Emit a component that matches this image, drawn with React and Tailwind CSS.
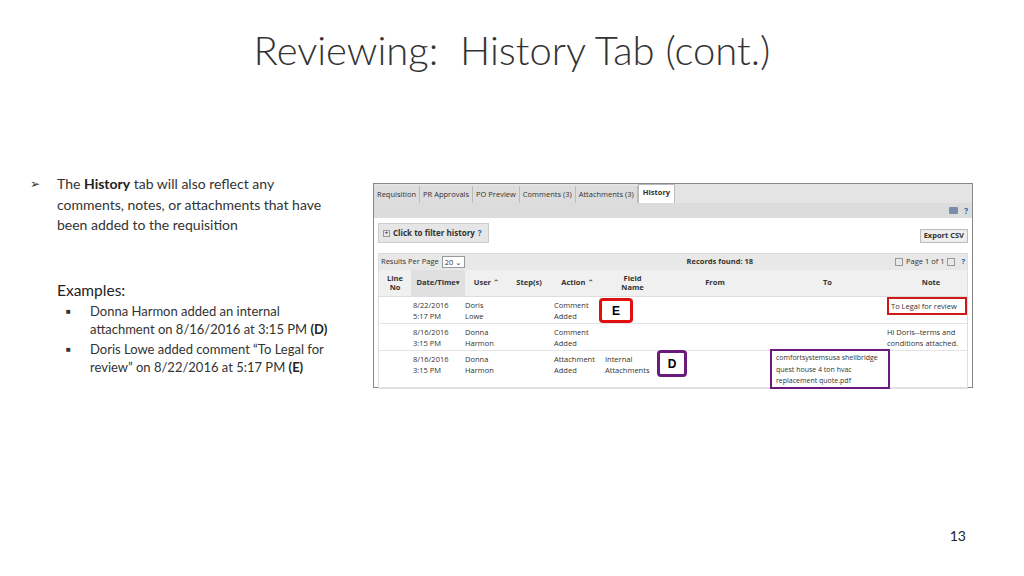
export default function App() {
  const f = { fontFamily: "Lato, 'Open Sans', sans-serif" };
  const s = { fontFamily: "'Open Sans', 'DejaVu Sans', sans-serif" };
  const cols = "grid grid-cols-[32px_54px_43px_42px_55px_55px_110px_115px_92px]";
  return (
    <div className="w-[1024px] h-[576px] bg-white relative overflow-hidden" style={f}>
      <div className="pt-[26px] text-center text-[40px] font-light text-[#333] leading-[48px]">Reviewing:&nbsp; History Tab (cont.)</div>
      <div className="flex mt-[100px]">
        <div className="w-[373px] flex-none pl-[30px] text-[14px] text-[#333] leading-[20.5px]">
          <div className="flex">
            <span className="w-[27px] flex-none text-[12px]">➢</span>
            <div className="w-[268px]">The <span className="font-bold text-[#222]">History</span> tab will also reflect any comments, notes, or attachments that have been added to the requisition</div>
          </div>
          <div className="ml-[27px] mt-[44px] text-[15.5px] text-[#222]">Examples:</div>
          <div className="ml-[36px] mt-[2px] text-[13px] leading-[18px]">
            {[["Donna Harmon added an internal attachment on 8/16/2016 at 3:15 PM ", "(D)"], ["Doris Lowe added comment “To Legal for review” on 8/22/2016 at 5:17 PM ", "(E)"]].map(([t, b], i) => (
              <div key={i} className="flex mb-[2px]">
                <span className="w-[24px] flex-none text-[8px] leading-[18px]">■</span>
                <div className="w-[250px]">{t}<span className="font-bold text-[#222] whitespace-nowrap">{b}</span></div>
              </div>
            ))}
          </div>
        </div>
        <div className="mt-[9px] w-[600px] h-[205px] flex-none border border-[#888] text-[8px] text-[#333] relative" style={s}>
          <div className="flex bg-[#e4e4e4] h-[19px] items-end text-[7.5px]">
            {["Requisition", "PR Approvals", "PO Preview", "Comments (3)", "Attachments (3)"].map((t) => (
              <div key={t} className="px-[3px] h-[17px] border-r border-[#bbb] flex items-center bg-[#ddd]">{t}</div>
            ))}
            <div className="px-[4px] h-[19px] font-bold bg-white border-x border-t border-[#bbb] flex items-start pt-[2px]">History</div>
          </div>
          <div className="h-[15px] bg-[#dcdcdc] flex items-center justify-end pr-[4px] gap-[6px]">
            <span className="w-[9px] h-[7px] bg-[#7a8ea8] rounded-[1px]" />
            <span className="text-[#1b5fb0] font-bold">?</span>
          </div>
          <div className="flex justify-between items-start px-[4px] pt-[5px]">
            <div className="h-[20px] w-[111px] bg-[#e6e6e6] border border-[#ccc] flex items-center gap-[3px] pl-[4px] font-bold">
              <span className="w-[7px] h-[7px] border border-[#999] text-[6px] leading-[5px] text-center">+</span>Click to filter history <span className="text-[#1b5fb0]">?</span>
            </div>
            <div className="mt-[6px] h-[14px] px-[3px] border border-[#bbb] bg-[#eee] font-bold text-[7.5px] flex items-center">Export CSV</div>
          </div>
          <div className="mx-[4px] mt-[10px] border border-[#ddd]">
            <div className="h-[16px] bg-[#e8e8e8] flex items-center justify-between px-[2px] text-[7.5px]">
              <div className="flex items-center gap-[3px]">Results Per Page <span className="border border-[#999] bg-white px-[2px] h-[12px] leading-[10px]">20 ⌄</span></div>
              <div className="font-bold ml-[80px]">Records found: 18</div>
              <div className="flex items-center gap-[3px]"><span className="w-[8px] h-[8px] border border-[#999]" />Page 1 of 1<span className="w-[8px] h-[8px] border border-[#999]" /><span className="text-[#1b5fb0] font-bold ml-[3px]">?</span></div>
            </div>
            <div className={`${cols} h-[27px] bg-[#f0f0f0] font-bold text-[7.5px] items-center text-center border-b border-[#ddd]`}>
              <div className="leading-[9px]">Line<br />No</div><div className="bg-[#e0e0e0] h-full flex items-center justify-center">Date/Time▾</div><div>User ⌃</div><div>Step(s)</div><div>Action ⌃</div><div className="leading-[9px]">Field<br />Name</div><div>From</div><div>To</div><div>Note</div>
            </div>
            {[
              ["8/22/2016", "5:17 PM", "Doris", "Lowe", "Comment", "Added", "", "", "", "To Legal for review"],
              ["8/16/2016", "3:15 PM", "Donna", "Harmon", "Comment", "Added", "", "", "", "Hi Doris--terms and conditions attached."],
              ["8/16/2016", "3:15 PM", "Donna", "Harmon", "Attachment", "Added", "Internal", "Attachments", "comfortsystemsusa shellbridge quest house 4 ton hvac replacement quote.pdf", ""],
            ].map((r, i) => (
              <div key={i} className={`${cols} ${i === 2 ? "h-[37px]" : "h-[27px]"} border-b border-[#e4e4e4] pt-[3px] leading-[11px] text-[7.5px]`}>
                <div /><div className="pl-[2px]">{r[0]}<br />{r[1]}</div><div>{r[2]}<br />{r[3]}</div><div /><div className="pl-[4px]">{r[4]}<br />{r[5]}</div><div>{r[6]}<br />{r[7]}</div><div />
                <div className="pr-[0px]">{r[8] && <div className="border-2 border-[#6b1a7e] -mt-[5px] -mr-[5px] px-[4px] py-[1px] h-[40px] text-[7px] leading-[11.5px]">{r[8]}</div>}</div>
                <div className="pl-[2px]">{i === 0 ? <div className="border-2 border-[#d01818] -mt-[3px] px-[2px] w-[80px] h-[18px] leading-[14px]">{r[9]}</div> : r[9]}</div>
              </div>
            ))}
          </div>
          <div className="absolute left-[225px] top-[114px] w-[34px] h-[25px] border-[3px] border-[#e01010] rounded-[4px] bg-white flex items-center justify-center font-bold text-[12px] text-black" style={{ fontFamily: "'Liberation Sans', sans-serif" }}>E</div>
          <div className="absolute left-[283px] top-[166px] w-[30px] h-[27px] border-[3px] border-[#6b1a7e] rounded-[4px] bg-white flex items-center justify-center font-bold text-[12px] text-black" style={{ fontFamily: "'Liberation Sans', sans-serif" }}>D</div>
        </div>
      </div>
      <div className="absolute right-[58px] bottom-[30px] text-[14px] text-[#222]">13</div>
    </div>
  );
}
